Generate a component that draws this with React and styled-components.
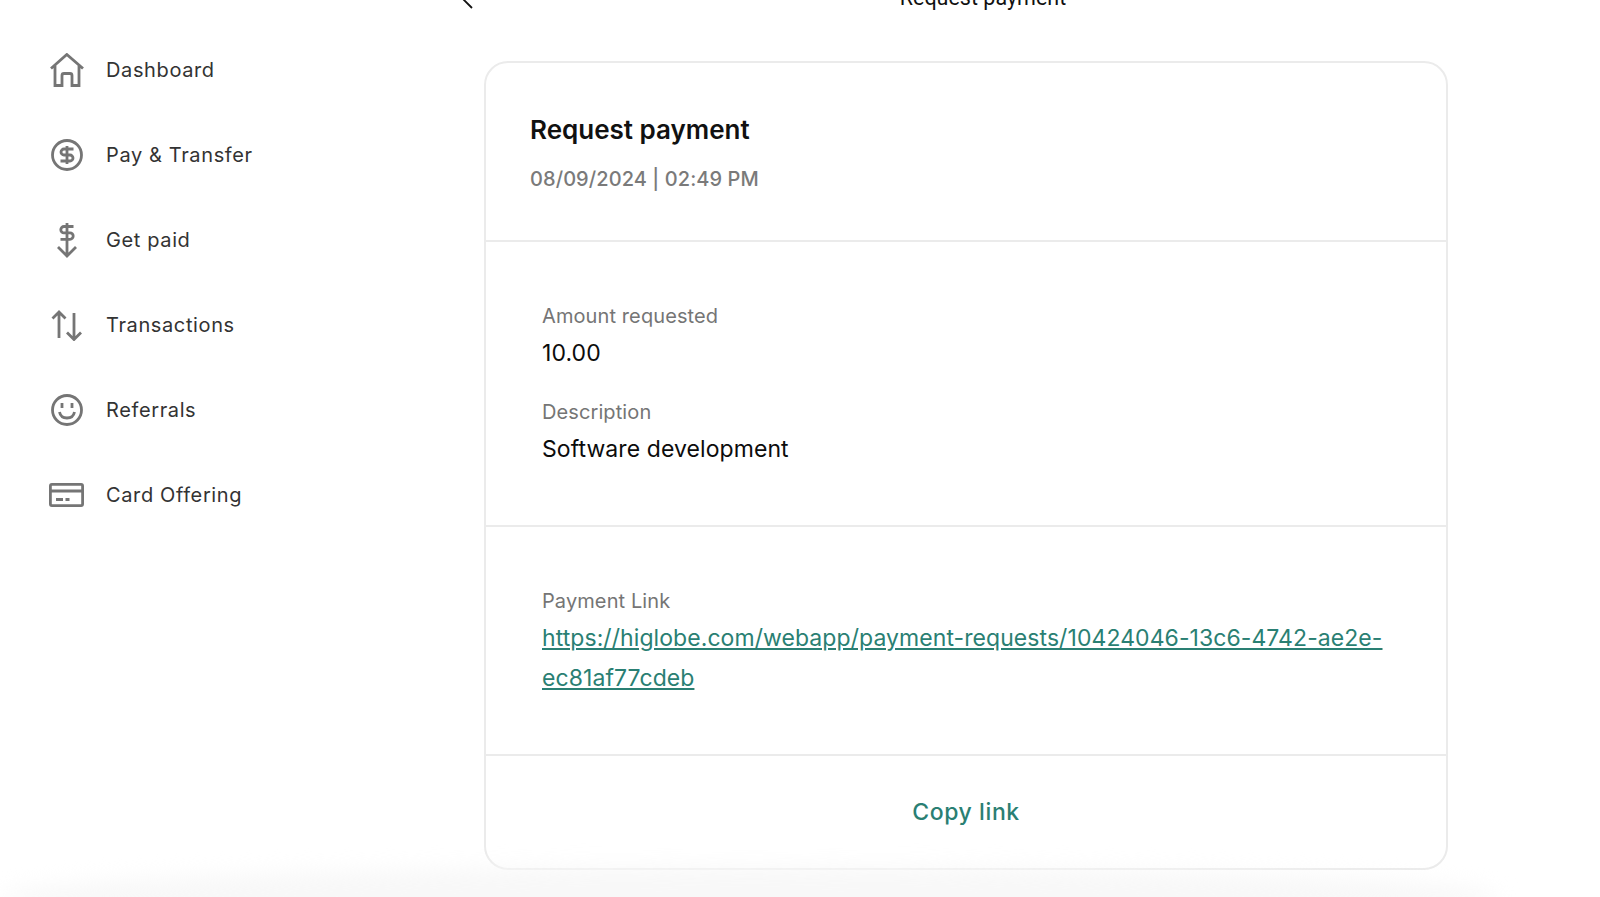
import React from 'react'
import styled, { createGlobalStyle } from 'styled-components'

const GlobalStyle = createGlobalStyle`
  html, body {
    margin: 0;
    padding: 0;
    height: 100%;
    background: #fff;
    font-family: Inter, "Liberation Sans", sans-serif;
    overflow: hidden;
  }
`

const Page = styled.div`
  position: relative;
  width: 1600px;
  height: 897px;
  overflow: hidden;
  display: flex;
  background: #fff;
`
const Sidebar = styled.nav`
  width: 484px;
  flex-shrink: 0;
  display: flex;
  flex-direction: column;
  gap: 45px;
  padding: 50px 0 0 49px;
  box-sizing: border-box;
`
const NavItem = styled.div`
  display: flex;
  align-items: center;
  height: 40px;
  gap: 22px;
  font-size: 20px;
  letter-spacing: 0.62px;
  color: #333;
`
const IconBox = styled.span`
  width: 35px;
  height: 40px;
  display: flex;
  align-items: center;
  justify-content: center;
  color: #757575;
`
const Main = styled.main`
  flex: 1;
  display: flex;
  flex-direction: column;
  margin-top: -19px;
`
const Header = styled.header`
  width: 964px;
  height: 80px;
  display: flex;
  flex-shrink: 0;
  align-items: flex-start;
  justify-content: center;
  position: relative;
  left: 17px;
  font-family: Roboto, sans-serif;
  font-size: 21.5px;
  line-height: 34px;
  color: #111;
`
const BackIcon = styled.svg`
  position: absolute;
  left: -41px;
  top: 5px;
`
const Card = styled.section`
  width: 964px;
  height: 809px;
  box-sizing: border-box;
  border: 2px solid #ebebeb;
  border-radius: 24px;
  display: flex;
  flex-direction: column;
`
const Section = styled.div`
  height: ${p => p.$height}px;
  flex-shrink: 0;
  box-sizing: border-box;
  padding: ${p => p.$padding};
  border-bottom: 2px solid #ebebeb;
`
const Title = styled.h1`
  margin: 0 0 16px;
  font-size: 26px;
  line-height: 34px;
  font-weight: 600;
  color: #111;
`
const Stamp = styled.div`
  font-size: 20px;
  line-height: 32px;
  font-weight: 500;
  letter-spacing: 0.08px;
  color: #7a7a7a;
`
const Field = styled.div`
  margin-bottom: 22px;
`
const Label = styled.div`
  font-size: 20px;
  line-height: 36px;
  letter-spacing: 0.1px;
  color: #757575;
`
const Value = styled.div`
  font-size: 23px;
  line-height: 38px;
  letter-spacing: 0.08px;
  color: #0c0c0c;
`
const PayLink = styled.a`
  display: block;
  margin-top: -1px;
  font-size: 23px;
  line-height: 40px;
  letter-spacing: 0.07px;
  color: #2a7f73;
  text-decoration: underline;
`
const CopyRow = styled.div`
  flex: 1;
  display: flex;
  align-items: center;
  justify-content: center;
  font-size: 23px;
  font-weight: 500;
  letter-spacing: 0.6px;
  color: #2a7f73;
`
const BottomFade = styled.div`
  position: absolute;
  left: 0;
  right: 100px;
  bottom: -30px;
  height: 60px;
  border-radius: 50%;
  background: #f8f8f8;
  filter: blur(10px);
  z-index: 0;
  pointer-events: none;
`

const stroke = { fill: 'none', stroke: 'currentColor', strokeWidth: 2.8 }

const HomeIcon = () => (
  <svg width="34" height="34" viewBox="0 0 34 34" {...stroke}>
    <path d="M1 15.500 16.800 1.500 33 15.500M5 11.500V32.500H12V22.500Q12 20.500 14 20.500H20Q22 20.500 22 22.500V32.500H29V11.500" />
  </svg>
)
const DollarCircleIcon = () => (
  <svg width="32" height="32" viewBox="0 0 32 32" {...stroke}>
    <circle cx="16" cy="16" r="14.500" />
    <path d="M22.500 10H13a3 3 0 0 0 0 6h6a3 3 0 0 1 0 6H9.500M16 7v18" />
  </svg>
)
const GetPaidIcon = () => (
  <svg width="24" height="36" viewBox="0 0 24 36" {...stroke}>
    <path d="M18.500 4.500H9a3.200 3.200 0 0 0 0 6.400h6a3.200 3.200 0 0 1 0 6.400H5.500M12 1v32M3 25l9 9 9-9" />
  </svg>
)
const TransferIcon = () => (
  <svg width="32" height="32" viewBox="0 0 32 32" {...stroke}>
    <path d="M8 29V3M1.500 9.500 8 3l6.500 6.500M23 4v26M16 23.500l7 7 7-7" />
  </svg>
)
const SmileIcon = () => (
  <svg width="32" height="32" viewBox="0 0 32 32" {...stroke}>
    <circle cx="16" cy="16" r="14.500" />
    <path d="M8.500 18c.8 4 3.800 6 7.500 6s6.700-2 7.500-6M11 9v5M21 9v5" />
  </svg>
)
const CardIcon = () => (
  <svg width="35" height="24" viewBox="0 0 35 24" {...stroke}>
    <rect x="1.400" y="1.400" width="32.200" height="21.200" rx="1.500" />
    <path d="M1 8h33M7 16.500h7M16.500 16.500h4" />
  </svg>
)

const navItems = [
  { label: 'Dashboard', icon: <HomeIcon /> },
  { label: 'Pay & Transfer', icon: <DollarCircleIcon /> },
  { label: 'Get paid', icon: <GetPaidIcon /> },
  { label: 'Transactions', icon: <TransferIcon /> },
  { label: 'Referrals', icon: <SmileIcon /> },
  { label: 'Card Offering', icon: <CardIcon /> },
]

export default function App() {
  return (
    <Page>
      <GlobalStyle />
      <BottomFade />
      <Sidebar>
        {navItems.map(item => (
          <NavItem key={item.label}>
            <IconBox>{item.icon}</IconBox>
            {item.label}
          </NavItem>
        ))}
      </Sidebar>
      <Main>
        <Header>
          <BackIcon width="14" height="24" viewBox="0 0 14 24" fill="none" stroke="#111" strokeWidth="1.800">
            <path d="M12 2 2 12l10 10" />
          </BackIcon>
          Request payment
        </Header>
        <Card>
          <Section $height={179} $padding="50px 0 0 44px">
            <Title>Request payment</Title>
            <Stamp>08/09/2024 | 02:49 PM</Stamp>
          </Section>
          <Section $height={285} $padding="56px 56px 0">
            <Field>
              <Label>Amount requested</Label>
              <Value>10.00</Value>
            </Field>
            <Field>
              <Label>Description</Label>
              <Value>Software development</Value>
            </Field>
          </Section>
          <Section $height={229} $padding="56px 40px 0 56px">
            <Label>Payment Link</Label>
            <PayLink href="#">https://higlobe.com/webapp/payment-requests/10424046-13c6-4742-ae2e-ec81af77cdeb</PayLink>
          </Section>
          <CopyRow>Copy link</CopyRow>
        </Card>
      </Main>
    </Page>
  )
}
